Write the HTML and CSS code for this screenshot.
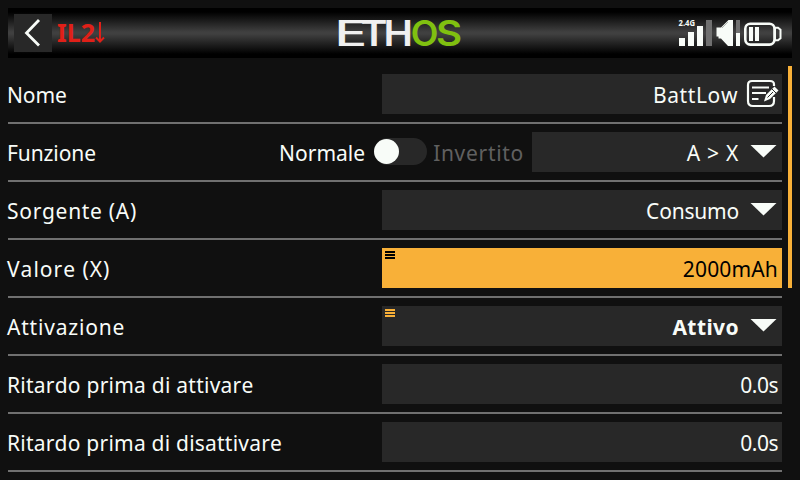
FILE: index.html
```
<!DOCTYPE html>
<html lang="it">
<head>
<meta charset="utf-8">
<title>ETHOS</title>
<link rel="stylesheet" href="styles.css">
</head>
<body>
<header class="topbar">
  <div class="nav">
    <button class="back" aria-label="Indietro">
      <svg width="38" height="38" viewBox="0 0 38 38"><path d="M25 6L12.500 19L25 31.500" fill="none" stroke="#f8fcf8" stroke-width="2.8"/></svg>
    </button>
    <span class="title">IL2</span>
    <svg class="arrow" width="10" height="22" viewBox="0 0 10 22"><path d="M5 0V20M1 15.500L5 19.500L9 15.500" fill="none" stroke="#e02018" stroke-width="2"/></svg>
  </div>
  <svg class="logo" width="126" height="50" viewBox="0 0 126 50">
    <g class="eth">
      <text class="wide" transform="translate(-2.500 38) scale(1.55 1)">E</text>
      <text transform="translate(23.500 38) scale(1.17 1)">T</text>
      <text transform="translate(46.500 38) scale(1.130 1)">H</text>
    </g>
    <g class="os">
      <text transform="translate(73.800 38) scale(1.03 1)">O</text>
      <text transform="translate(99 38) scale(1.15 1)">S</text>
    </g>
  </svg>
  <svg class="status" width="106" height="50" viewBox="0 0 106 50">
    <text class="band" x="0.500" y="18" textLength="16.500" lengthAdjust="spacingAndGlyphs">2.4G</text>
    <g fill="#f8fcf8">
      <path d="M1 30h6v8h-6zM10 24h6v14h-6zM19 18h6v20h-6z"/>
      <path d="M38.500 19.500h4.500L50.500 12h4.500v26h-5L43 30.500h-2.500v-2h-2z"/>
      <path d="M58 25h4v13h-4zM71 19h4v14h-4zM77 19h4v14h-4z"/>
    </g>
    <path d="M28 12h6v26h-6zM58 12h4v13h-4z" fill="#707070"/>
    <path d="M44 20l6-6" stroke="#a0a4a0" stroke-width=".8"/>
    <rect x="67.300" y="15.800" width="29.200" height="20.800" rx="5" fill="none" stroke="#f8fcf8" stroke-width="2.600"/>
    <path d="M97 19.800h3l2.500 2v8.500l-2.500 2h-3z" fill="none" stroke="#f8fcf8" stroke-width="2"/>
  </svg>
</header>
<main class="form">
  <div class="rows">
    <div class="row"><span class="label nome">Nome</span>
      <div class="field"><span class="v-name">BattLow</span>
        <svg class="edit" width="34" height="34" viewBox="0 0 34 34" fill="none" stroke="#f8fcf8" stroke-width="2.200">
          <path d="M28 9V7.500Q28 4 24 4H6Q2 4 2 8V24Q2 29 7 29H23Q28 29 28 24V20"/>
          <path d="M6 10.500H23M6 16H20M6 22H12.500"/>
          <path d="M18 24.500L20 18L28.500 9.500L32.500 13.500L24 22Z" fill="#f8fcf8" stroke="none"/>
          <path d="M26 12L30 16M21.500 20.500L27 15" stroke="#282828" stroke-width="1"/>
        </svg>
      </div>
    </div>
    <div class="row"><span class="label funz">Funzione</span>
      <div class="switch"><span class="normal">Normale</span><span class="track"><span class="thumb"></span></span><span class="inverted">Invertito</span></div>
      <div class="field short"><span class="v-fn">A &gt; X</span><span class="caret"></span></div>
    </div>
    <div class="row"><span class="label sorg">Sorgente (A)</span>
      <div class="field"><span class="v-src">Consumo</span><span class="caret"></span></div>
    </div>
    <div class="row"><span class="label valo">Valore (X)</span>
      <div class="field selected"><span class="menu"></span><span class="v-val">2000mAh</span></div>
    </div>
    <div class="row"><span class="label atti">Attivazione</span>
      <div class="field"><span class="menu"></span><span class="v-act">Attivo</span><span class="caret"></span></div>
    </div>
    <div class="row"><span class="label rit1">Ritardo prima di attivare</span>
      <div class="field"><span class="v-sec">0.0s</span></div>
    </div>
    <div class="row"><span class="label rit2">Ritardo prima di disattivare</span>
      <div class="field"><span class="v-sec">0.0s</span></div>
    </div>
  </div>
  <div class="scrollbar"></div>
</main>
</body>
</html>
```
FILE: styles.css
```
* { box-sizing: border-box; }
body {
  margin: 0;
  padding: 8px;
  width: 800px;
  height: 480px;
  overflow: hidden;
  background: #101010;
  color: #f8fcf8;
  font: 21px/40px "Noto Sans", sans-serif;
  font-kerning: none;
  white-space: nowrap;
}
.topbar {
  display: grid;
  grid-template-columns: 329px 1fr 106px;
  height: 50px;
  padding-right: 8px;
  background: linear-gradient(#000 0, #000 8%, #404040 48%, #404040 52%, #000 92%, #000 100%);
}
.nav { display: flex; align-items: flex-start; padding: 6px 0 0 6px; }
.back { width: 38px; height: 38px; padding: 0; border: 0; background: #282828; }
.back svg { display: block; }
.title { margin-left: 5px; color: #e02018; font-size: 25px; font-weight: 700; line-height: 37px; }
.arrow { margin: 8px 0 0 0; }
.logo, .status { display: block; overflow: visible; }
.eth, .os { font: 600 35px Inter, sans-serif; }
.eth { fill: #f0f0f0; }
.wide { font-weight: 500; }
.os { fill: #80c010; }
.band { font: 700 8px "Noto Sans", sans-serif; fill: #f8fcf8; }
.form { display: flex; gap: 6px; margin-top: 8px; }
.rows { width: 774px; }
.row { display: flex; align-items: center; height: 58px; padding: 8px 0; border-bottom: 2px solid #707070; }
.label { flex: 1; padding-top: 2px; margin-left: -1px; }
.nome { letter-spacing: -.1px; }
.funz { letter-spacing: -.1px; }
.sorg { letter-spacing: .7px; }
.valo { letter-spacing: 1px; }
.atti { letter-spacing: .8px; }
.rit1 { letter-spacing: .24px; }
.rit2 { letter-spacing: .22px; }
.field {
  position: relative;
  display: flex;
  align-items: center;
  justify-content: flex-end;
  width: 400px;
  height: 40px;
  padding: 2px 4px 0 0;
  background: #282828;
}
.short { width: 250px; }
.selected { background: #f8b038; color: #000; }
.edit { margin: -2px -2px 0 8px; }
.caret { width: 27px; height: 13px; margin: -4px 1px 0 11px; background: #f8fcf8; clip-path: polygon(0 0, 100% 0, 50% 100%); }
.menu {
  position: absolute;
  top: 3px;
  left: 3px;
  width: 10px;
  height: 8px;
  background: repeating-linear-gradient(#f8b038 0 2px, transparent 2px 3px);
}
.selected .menu { background: repeating-linear-gradient(#000 0 2px, transparent 2px 3px); }
.switch { display: flex; align-items: center; padding-right: 8px; }
.normal, .inverted { padding-top: 2px; }
.normal { letter-spacing: 0; }
.inverted { color: #606060; letter-spacing: .7px; }
.track { width: 53px; height: 27px; margin: -2px 6px 0 9px; padding: 1px 0; border-radius: 14px; background: #282828; }
.thumb { display: block; width: 25px; height: 25px; border-radius: 50%; background: #f8fcf8; }
.scrollbar { width: 4px; height: 222px; background: #f8b038; }
.v-name { letter-spacing: .6px; }
.v-fn { letter-spacing: .7px; }
.v-src { letter-spacing: -.2px; }
.v-val { letter-spacing: .15px; }
.v-sec { letter-spacing: -.5px; }
.v-act { font-weight: 700; letter-spacing: .4px; }
```
